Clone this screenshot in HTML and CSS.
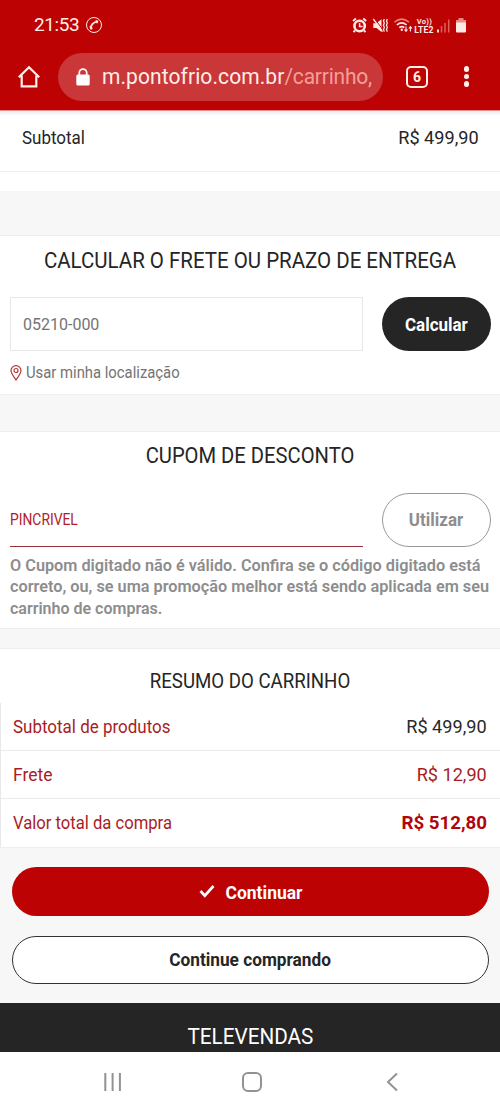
FILE: index.html
```html
<!DOCTYPE html>
<html lang="pt-BR">
<head>
<meta charset="utf-8">
<title>Carrinho</title>
<link rel="stylesheet" href="styles.css">
</head>
<body>
<header class="browser">
  <div class="status">
    <span class="clock">21:53</span>
    <svg class="call" width="18" height="18" viewBox="0 0 18 18" fill="none" stroke="#ffe9e4"><circle cx="9" cy="9" r="7.5" stroke-width="1"/><path d="M5.700 12.500C5.600 9.200 8.200 6.200 11.800 5.900" stroke-width="1.800"/><path d="M4.800 10.500l2 .1.400 2.200-1.400.7zM10.800 4.600l2.100.1-.1 2.100-1.700.1z" fill="#ffe9e4" stroke-width=".6"/></svg>
    <svg class="indicators" width="116" height="18" viewBox="351 15 116 18" fill="none" stroke="#ffe9e4">
      <circle cx="359.600" cy="25" r="5.200" stroke-width="2.600"/><path d="M353 20l3-2.500M363.200 17.500l3 2.500M355 29.500l-1.500 1.700M364 29.500l1.500 1.700" stroke-width="1.900"/><path d="M359.600 22v3.400h3" stroke-width="1.500"/>
      <path d="M373.300 22.200h3.200l5-4v12.800l-5-4h-3.200z" fill="#ffe9e4" stroke="none"/><path d="M374 17l9.500 12.500" stroke="#bd0204" stroke-width="1"/><path d="M373.300 18l9.200 12.700" stroke-width="1.300"/><path d="M384.300 18l-.8 2 .8 2-.8 2.200.8 2.200-.8 2 .8 2.200M387.300 18l-.8 2 .8 2-.8 2.200.8 2.200-.8 2 .8 2.200" stroke-width="1.300"/>
      <path d="M394.400 21.200q7.300-6.200 14.600 0" stroke="#eb8076" stroke-width="1.500"/><path d="M396.800 24q4.900-4.200 9.800 0M399.300 26.700q2.600-2.200 5 0" stroke-width="1.600"/><circle cx="401.800" cy="28.800" r="1.200" fill="#ffe9e4" stroke="none"/><path d="M406 25.500v4.700m-1.500-1.700l1.500 1.900 1.500-1.900M410.400 30.500v-4.700m-1.500 1.700l1.500-1.900 1.500 1.900" stroke-width="1.100"/>
      <g class="network" fill="#ffe9e4" stroke="none"><text x="416.800" y="23" font-size="7.500" textLength="15">Vo))</text><text x="414.300" y="31.500" font-size="8.700" textLength="19.200">LTE2</text></g>
      <path d="M438 28.500v3" stroke-width="1.800"/><path d="M441.500 25v6.500M445 22v9.500M448.700 18.500v13" stroke="#dd6159" stroke-width="1.500"/>
      <path d="M458.500 17h5v2h2.500v3.500h-10v-3.500h2.500z" fill="#eb8b83" stroke="none"/><path d="M456 21.500h10v9q0 1-1 1h-8q-1 0-1-1z" fill="#ffe9e4" stroke="none"/>
    </svg>
  </div>
  <div class="toolbar">
    <svg class="home" width="24" height="24" viewBox="0 0 24 24" fill="none" stroke="#fff2ec" stroke-width="2.200"><path d="M1.800 12.300L12 2.200l10.200 10.100M4.700 10.500V21.400h14.600V10.500"/></svg>
    <div class="address">
      <svg width="14" height="18" viewBox="0 0 14 18"><path d="M3.300 8V4.800a3.700 3.700 0 0 1 7.400 0V8" fill="none" stroke="#fff" stroke-width="1.700"/><rect x=".3" y="6.500" width="13.400" height="11" rx="1.500" fill="#fff"/></svg>
      <span class="url"><span class="host">m.pontofrio.com.br</span><span class="path">/carrinho,</span></span>
    </div>
    <span class="tabs">6</span>
    <span class="more"><i></i><i></i><i></i></span>
  </div>
</header>
<main>
  <div class="item-total"><span class="t-sub">Subtotal</span><span class="t-price">R$ 499,90</span></div>
  <section class="card shipping">
    <h2 class="t-ship">CALCULAR O FRETE OU PRAZO DE ENTREGA</h2>
    <div class="form"><div class="zip"><span>05210-000</span></div><div class="pill dark"><span>Calcular</span></div></div>
    <div class="locate"><svg width="12" height="16" viewBox="0 0 12 16" fill="none" stroke="#b4373b" stroke-width="1.200"><path d="M6 15C4.400 12 1 9 1 5.600a5 5 0 0 1 10 0C11 9 7.600 12 6 15z"/><circle cx="6" cy="5.500" r="2"/></svg><span>Usar minha localização</span></div>
  </section>
  <section class="card coupon">
    <h2 class="t-coupon">CUPOM DE DESCONTO</h2>
    <div class="form"><div class="code"><span>PINCRIVEL</span></div><div class="pill outline"><span>Utilizar</span></div></div>
    <p class="message"><span class="m1">O Cupom digitado não é válido. Confira se o código digitado está</span><br><span class="m2">correto, ou, se uma promoção melhor está sendo aplicada em seu</span><br><span class="m3">carrinho de compras.</span></p>
  </section>
  <section class="card summary">
    <h2 class="t-sum">RESUMO DO CARRINHO</h2>
    <div class="rows">
      <div class="row"><span class="l1">Subtotal de produtos</span><span class="ink t-price">R$ 499,90</span></div>
      <div class="row"><span class="l2">Frete</span><span class="t-price">R$ 12,90</span></div>
      <div class="row"><span class="l3">Valor total da compra</span><span class="total">R$ 512,80</span></div>
    </div>
  </section>
  <div class="actions">
    <div class="action primary"><svg width="16" height="14" viewBox="0 0 16 14"><path d="M1.500 7l4.300 4.700L14.500 2" fill="none" stroke="#fff" stroke-width="2.700"/></svg><span>Continuar</span></div>
    <div class="action secondary"><span>Continue comprando</span></div>
  </div>
</main>
<footer class="phone-sales"><span>TELEVENDAS</span></footer>
<nav class="system">
  <svg width="20" height="20" viewBox="0 0 20 20" stroke="#929292" stroke-width="2"><path d="M2.300 1v18M9.600 1v18M16.900 1v18"/></svg>
  <svg class="home-key" width="20" height="20" viewBox="0 0 20 20" fill="none" stroke="#929292" stroke-width="2"><rect x="1" y="1" width="18" height="18" rx="5"/></svg>
  <svg width="12" height="20" viewBox="0 0 12 20" fill="none" stroke="#929292" stroke-width="2"><path d="M11 1.500L2 10l9 8.500"/></svg>
</nav>
</body>
</html>
```
FILE: styles.css
```css
* { box-sizing: border-box; }
body { margin: 0; width: 500px; height: 1111px; overflow: hidden; background: #f7f7f7; color: #252525; font: 17.5px/24px Roboto, "Open Sans", sans-serif; }
span { white-space: nowrap; }
svg { display: block; flex: none; }
.browser { height: 110px; background: #bd0204; color: #ffeee8; }
.status { display: flex; height: 50px; padding: 0 33px 0 34px; align-items: center; }
.clock { font-size: 19px; letter-spacing: -.4px; }
.call { margin-left: 6px; }
.indicators { margin-left: auto; }
.network { font-family: Roboto, sans-serif; font-weight: 700; }
.toolbar { display: flex; align-items: center; height: 53px; padding: 0 31px 0 17px; }
.address { display: flex; align-items: center; width: 325px; height: 48px; margin-left: 17px; padding-left: 18px; border-radius: 24px; background: #c93739; overflow: hidden; }
.url { margin-left: 12px; font-size: 21.3px; letter-spacing: .1px; transform: scaleX(.985); transform-origin: left; }
.path { color: #f3a099; letter-spacing: -.2px; }
.tabs { display: flex; align-items: center; justify-content: center; width: 22px; height: 22px; margin-left: 23px; border: 2px solid #fff0eb; border-radius: 5px; font-size: 14px; font-weight: 700; }
.more { display: flex; flex-direction: column; gap: 2px; margin-left: auto; }
.more i { width: 5.4px; height: 5.4px; border-radius: 50%; background: #fff0eb; }
.item-total { display: flex; justify-content: space-between; height: 81px; padding: 16px 21px 0 22px; background: linear-gradient(#e58d90 0, #e58d90 1px, #e7eaf0 1px, #fff 6px, #fff 61px, #eee 61px, #eee 62px, #fff 62px); }
.t-sub { transform: scaleX(.97); transform-origin: left; }
.t-price { transform: scaleX(1.035); transform-origin: right; }
.card { background: #fff; border: solid #eee; border-width: 1px 0; }
h2 { margin: 0; text-align: center; font-size: 22.5px; line-height: 30px; font-weight: 400; white-space: nowrap; }
.t-ship { transform: scaleX(.91); }
.t-coupon { transform: scaleX(.897); }
.t-sum { transform: scaleX(.91); }
.shipping { margin-top: 44px; height: 160px; padding-top: 9px; }
.form { display: flex; justify-content: space-between; padding: 0 9px 0 10px; }
.shipping .form { margin-top: 22px; }
.zip { width: 353px; height: 54px; padding: 15px 12px; border: 1px solid #e7e7e7; color: #747474; font-size: 16px; }
.pill { display: flex; align-items: center; justify-content: center; width: 109px; height: 54px; padding-top: 1px; border-radius: 27px; font-weight: 700; }
.dark { background: #252525; color: #fff; }
.dark span { transform: scaleX(.97); }
.outline { border: 1px solid #999; color: #8d8d8d; padding: 0; }
.outline span { transform: scaleX(.97); }
.locate { display: flex; gap: 3.5px; align-items: center; padding: 10px 0 0 10px; color: #747474; font-size: 16px; }
.locate span { transform: scaleX(.927); transform-origin: left; }
.coupon { margin-top: 36px; height: 198px; padding-top: 8px; }
.coupon .form { margin-top: 23px; }
.code { width: 353px; height: 54px; padding-top: 15px; border-bottom: 1px solid #963039; color: #b12029; font-size: 16px; }
.code span { display: inline-block; transform: scaleX(.865); transform-origin: left; }
.message { margin: 8px 0 0 10px; color: #8d8d8d; font-size: 16px; line-height: 21.3px; font-weight: 600; }
.message span { display: inline-block; transform-origin: left; }
.m1, .m2 { transform: scaleX(1.016); }
.summary { margin-top: 19px; height: 200px; padding-top: 17px; }
.summary h2 { font-size: 20.5px; }
.rows { margin-top: 7px; border-left: 1px solid #e8e8ea; }
.row { display: flex; justify-content: space-between; align-items: center; height: 48px; padding: 0 13px 0 12px; border-bottom: 1px solid #ebebeb; color: #a91c25; }
.row:last-child { border: 0; }
.l1, .l3 { transform: scaleX(.97); transform-origin: left; }
.l3 { transform: scaleX(.95); }
.ink { color: #292929; }
.total { color: #b0050a; font-weight: 700; transform: scaleX(1.07); transform-origin: right; }
.actions { display: grid; gap: 20px; padding: 19px 11px 19px 12px; }
.action { display: flex; align-items: center; justify-content: center; gap: 10px; height: 48.5px; border-radius: 25px; font-weight: 700; }
.primary { padding: 3px 0 0 1px; background: #bd0204; color: #fff; }
.primary svg { margin-top: -3px; }
.secondary { border: 1px solid #333; background: #fff; color: #252525; }
.secondary span { transform: scaleX(.985); }
.phone-sales { height: 49px; padding-top: 18px; background: #252525; color: #fff; text-align: center; font-size: 22.5px; line-height: 30px; }
.phone-sales span { display: inline-block; transform: scaleX(.92); }
.system { display: flex; align-items: center; justify-content: space-between; height: 60px; padding: 0 102px 0 103px; background: #fff; }
.home-key { margin-right: 6px; }
```
